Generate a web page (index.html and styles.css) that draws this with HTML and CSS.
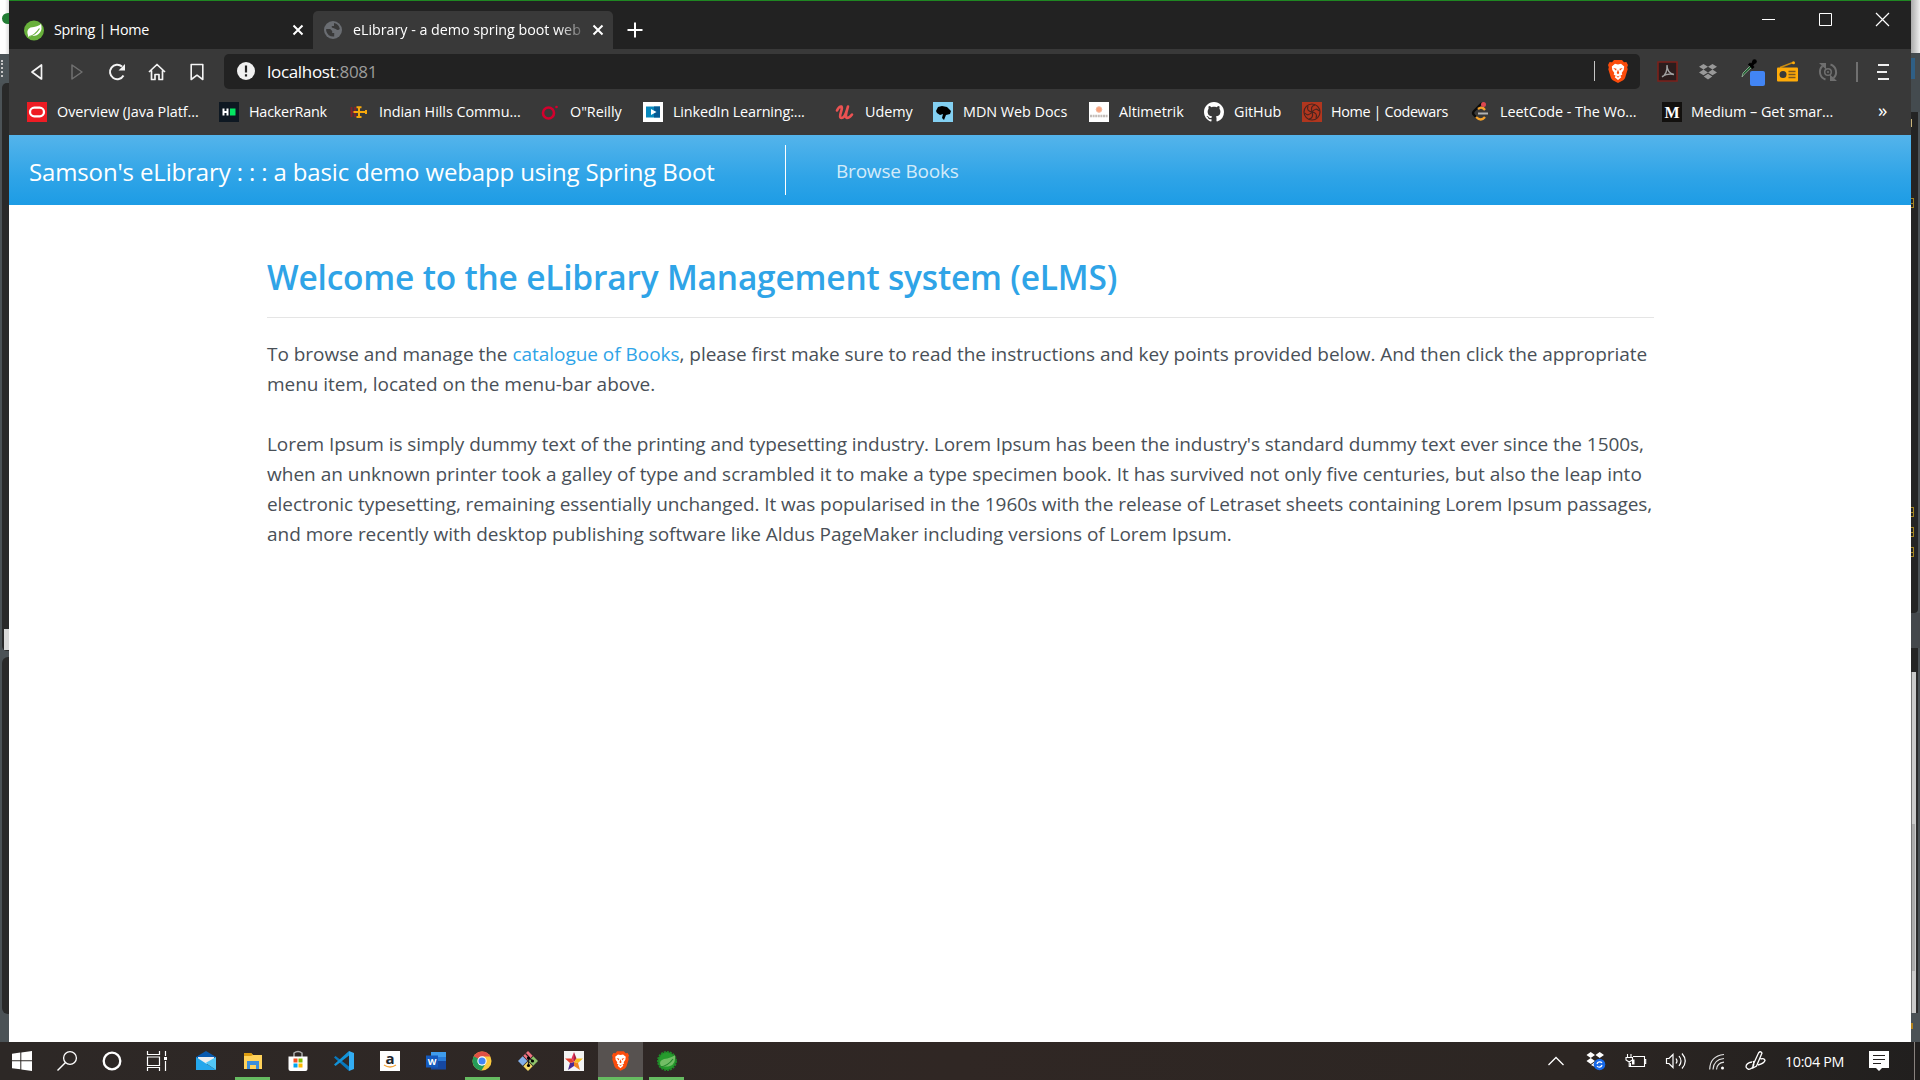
FILE: index.html
```
<!DOCTYPE html>
<html lang="en">
<head>
<meta charset="utf-8">
<title>eLibrary - a demo spring boot webapp</title>
<link rel="stylesheet" href="styles.css">
</head>
<body>
<svg class="defs" width="0" height="0" aria-hidden="true">
  <symbol id="x" viewBox="0 0 12 12"><path d="M1.5 1.5l9 9M10.500 1.500l-9 9" stroke="currentColor" stroke-width="2"/></symbol>
  <symbol id="brave" viewBox="0 0 20 23">
    <path d="M6 0h8l2 2.300 2.400-.2L20 5l-.8 2.300.5 2-2.500 8.200q-.5 1.700-2 2.800L10 23l-5.200-2.700q-1.500-1.100-2-2.800L.3 9.300l.5-2L0 5l1.600-2.900L4 2.300z" fill="#fb4c0c"/>
    <path d="M7 3.800l3 .6 3-.6 3.200 2.800-.5 3.400-2 3 .6 1.500-2 1.200 1 1.500L10 20l-3.300-2.800 1-1.500-2-1.200.6-1.500-2-3-.5-3.400z" fill="#fff"/>
    <path d="M5.300 8l3.200.8-.4 2zM14.700 8l-3.200.8.4 2zM10 9.500l1.300 3.500L10 14.200 8.700 13zM8 15.500l2 1 2-1-2 2.300z" fill="#fb4c0c"/>
  </symbol>
  <symbol id="dropbox" viewBox="0 0 18 16"><path d="M4.500 0L9 2.800 4.500 5.600 0 2.800zM13.500 0L18 2.800l-4.500 2.800L9 2.800zM4.500 5.600L9 8.400l-4.500 2.800L0 8.400zM13.500 5.600L18 8.400l-4.500 2.800L9 8.400zM4.700 12.500L9 9.800l4.300 2.700L9 15.600z" fill="currentColor"/></symbol>
</svg>
<div class="desktop">
  <aside class="edge edge-left">
    <div class="l-white"><i class="leaf-bit"></i></div>
    <div class="l-grey"><i class="dots"></i></div>
    <div class="l-panel l-first"><i class="thumb"></i></div>
    <div class="l-gap"></div>
    <div class="l-panel l-second"></div>
    <div class="l-foot"></div>
  </aside>

  <main class="window">
    <header class="tabs">
      <div class="tab">
        <svg class="tab-icon" width="20" height="21" viewBox="0 0 20 21"><circle cx="10" cy="10.500" r="10" fill="#68b03b"/><path d="M17 4q1.500 5-1 8.500-3 4-9 3.500l-2 1.300-.7-.8Q1.500 10 6.500 7.600 14 6.800 17 4z" fill="#fff"/><path d="M5 16.500q6-1 10.500-8" stroke="#68b03b" stroke-width="1.200" fill="none"/></svg>
        <span class="tab-title home-title">Spring | Home</span>
        <svg class="close" width="12" height="12"><use href="#x"/></svg>
      </div>
      <div class="tab active">
        <svg class="tab-icon globe" width="18" height="18" viewBox="0 0 18 18"><circle cx="9" cy="9" r="9" fill="#6a6d72"/><path d="M2.200 8h4l2 2v2h2v3.500Q4 16 2.200 10zM10 2q5 1 5.800 6-2 2-4 0-2-1-4-1.500V5h2.200z" fill="#393939"/></svg>
        <span class="tab-title">eLibrary - a demo spring boot web</span>
        <svg class="close" width="12" height="12"><use href="#x"/></svg>
      </div>
      <svg class="plus" width="16" height="16" viewBox="0 0 16 16"><path d="M8 .5v15M.5 8h15" stroke="#fff" stroke-width="2"/></svg>
      <div class="controls">
        <svg width="13" height="13"><path d="M0 6.500h13" stroke="#fff"/></svg>
        <svg width="13" height="13"><path d="M.5.500h12v12H.5z" stroke="#fff" fill="none"/></svg>
        <svg width="13" height="13"><path d="M0 0l13 13M13 0L0 13" stroke="#fff" stroke-width="1.200"/></svg>
      </div>
    </header>

    <div class="toolbar">
      <div class="nav-icons">
        <svg width="18" height="18" viewBox="0 0 18 18"><path d="M13.500 2v14L4 9z" fill="none" stroke="#f4f4f4" stroke-width="1.700" stroke-linejoin="round"/></svg>
        <svg width="18" height="18" viewBox="0 0 18 18"><path d="M4 2v14L14 9z" fill="none" stroke="#707070" stroke-width="1.500" stroke-linejoin="round"/></svg>
        <svg width="18" height="18" viewBox="0 0 18 18"><path d="M15.500 12.500A7.200 7.200 0 1 1 14 3.600" fill="none" stroke="#f4f4f4" stroke-width="2"/><path d="M17 1v6.500h-6.500z" fill="#f4f4f4"/></svg>
        <svg width="18" height="18" viewBox="0 0 18 18"><path d="M1 9l8-7.500L17 9M3.500 7.500v9H7v-5h4v5h3.500v-9" fill="none" stroke="#f4f4f4" stroke-width="1.700" stroke-linejoin="round"/></svg>
        <svg width="18" height="18" viewBox="0 0 18 18"><path d="M3.200 1.500h11.600v15L9 12.200l-5.800 4.300z" fill="none" stroke="#f4f4f4" stroke-width="1.600" stroke-linejoin="round"/></svg>
      </div>
      <div class="address">
        <svg width="18" height="18" viewBox="0 0 18 18"><circle cx="9" cy="9" r="9" fill="#f0f0f0"/><path d="M9 3.500v7M9 12.300v2.300" stroke="#222" stroke-width="2.200"/></svg>
        <span class="url">localhost<span class="port">:8081</span></span>
        <i class="address-rule"></i>
        <svg class="shield" width="20" height="23"><use href="#brave"/></svg>
      </div>
      <div class="extensions">
        <svg width="21" height="21" viewBox="0 0 21 21"><path d="M1 1h19v19H1z" fill="#2b1d1d" stroke="#7c211b" stroke-width="1.600"/><path d="M5 16q5.500-3 5-12M10 4q0 8 7 9.500-6-1.500-12 2" fill="none" stroke="#a0a0a0" stroke-width="1.400"/></svg>
        <svg class="grey" width="18" height="16"><use href="#dropbox"/></svg>
        <svg width="26" height="28" viewBox="0 0 26 28"><path d="M2 19l1-4 7.500-7.500 1.500 1.500-8 7.500z" fill="#195c2a" stroke="#9bb7a0" stroke-width=".8"/><path d="M9 5.500l4.500 4.500M11 8l3.500-4.500" stroke="#000" stroke-width="3"/><circle cx="14.500" cy="3.500" r="2.300"/><rect x="10" y="13" width="15" height="15" rx="2" fill="#4285f4"/></svg>
        <svg width="21" height="21" viewBox="0 0 21 21"><path d="M3 6.500L16 1.500" stroke="#c88c12" stroke-width="1.500"/><circle cx="16.500" cy="1.700" r="1.500" fill="#ffab08"/><rect y="6.500" width="21" height="14" rx="1" fill="#ffab08"/><circle cx="6" cy="13.500" r="3.500" fill="#393939"/><path d="M11.500 10.500h7M11.500 13.500h7M11.500 16.500h7" stroke="#7b5820" stroke-width="1.300"/></svg>
        <svg width="20" height="20" viewBox="0 0 20 20"><path d="M7.500 17.500A8 8 0 0 1 4.500 4M12.500 2.500a8 8 0 0 1 3 13.500" fill="none" stroke="#6f6f6f" stroke-width="2"/><path d="M1 1h7v6.500zM19 19h-7v-6.500z" fill="#6f6f6f"/><circle cx="10" cy="10" r="3.300" fill="none" stroke="#6f6f6f" stroke-width="1.500"/><circle cx="10" cy="10" r="1" fill="#6f6f6f"/></svg>
        <i class="tool-rule"></i>
        <svg width="12" height="16" viewBox="0 0 12 16"><path d="M1 1h11M0 8h10M1 15h11" stroke="#f0f0f0" stroke-width="2"/></svg>
      </div>
    </div>

    <nav class="bookmarks">
      <a><svg viewBox="0 0 20 20"><path d="M0 0h20v20H0z" fill="#ee1c24"/><rect x="3" y="5.700" width="14" height="8.600" rx="4.300" fill="none" stroke="#fff" stroke-width="2.300"/></svg>Overview (Java Platf...</a>
      <a class="tight"><svg viewBox="0 0 20 20"><path d="M0 0h20v20H0z" fill="#0e1822"/><path d="M4.500 6.500v7M8.500 6.500v7M4.500 10h4" stroke="#fff" stroke-width="2"/><path d="M11 6.500h5.500v7H11z" fill="#04e762"/></svg>HackerRank</a>
      <a><svg viewBox="0 0 20 20"><path d="M2.500 5v10M6 5v10M2.500 10h5" stroke="#842129" stroke-width="1.800"/><path d="M10 4.500v11M4.500 10h13M7.500 5.200h5M7.500 15h5M17 8v4" stroke="#f6a80c" stroke-width="2"/></svg>Indian Hills Commu...</a>
      <a><svg viewBox="0 0 20 20"><circle cx="8.500" cy="11" r="5.500" fill="none" stroke="#d3002d" stroke-width="2.600"/><circle cx="16.500" cy="5" r="1.300" fill="#d3002d"/></svg>O"Reilly</a>
      <a class="snug"><svg viewBox="0 0 20 20"><path d="M0 0h20v20H0z" fill="#fff"/><path d="M3 4.500h14v11H3z" fill="#0788bd"/><path d="M11 4.500h6v11h-6z" fill="#065a94"/><path d="M8 7l5.500 3L8 13z" fill="#fff"/></svg>LinkedIn Learning:...</a>
      <a><svg viewBox="0 0 20 20"><path d="M2 8.500Q4 4 6.500 4.500 7.500 6 6 10q-2 6 .5 6 3 0 5.500-8l1-3.500q-3.500 11-1 11.500 2.500 0 5-3.500" fill="none" stroke="#ec5252" stroke-width="2.600" stroke-linecap="round" stroke-linejoin="round"/></svg>Udemy</a>
      <a><svg viewBox="0 0 20 20"><path d="M0 0h20v20H0z" fill="#83d0f2"/><path d="M3 9l2-4 4-1 5 1 4 4-1 3-4 1-2 5-2-2 1-4-3 1-3-2z"/></svg>MDN Web Docs</a>
      <a><svg viewBox="0 0 20 20"><path d="M0 0h20v20H0z" fill="#fff"/><circle cx="10" cy="7.500" r="2.800" fill="#f8a37e" stroke="#f4b89d"/><path d="M1 14h18" stroke="#c3bdb9" stroke-width="2.500" stroke-dasharray="2 .6"/></svg>Altimetrik</a>
      <a><svg viewBox="0 0 16 16"><path fill="#fff" d="M8 0C3.580 0 0 3.580 0 8c0 3.540 2.290 6.530 5.470 7.590.4.070.55-.17.55-.38 0-.19-.01-.82-.01-1.490-2.010.37-2.530-.49-2.690-.94-.09-.23-.48-.94-.82-1.130-.28-.15-.68-.52-.01-.53.63-.01 1.080.58 1.230.82.72 1.210 1.870.87 2.330.66.07-.52.28-.87.51-1.070-1.780-.2-3.640-.89-3.640-3.950 0-.87.31-1.590.82-2.150-.08-.2-.36-1.020.08-2.120 0 0 .67-.21 2.200.82.640-.18 1.320-.27 2-.27s1.360.09 2 .27c1.530-1.040 2.200-.82 2.200-.82.44 1.100.16 1.920.08 2.120.51.56.82 1.270.82 2.150 0 3.070-1.870 3.750-3.650 3.950.29.25.54.73.54 1.480 0 1.070-.01 1.930-.01 2.200 0 .21.15.46.55.38A8.010 8.010 0 0 0 16 8c0-4.420-3.580-8-8-8z"/></svg>GitHub</a>
      <a class="tighter"><svg viewBox="0 0 20 20"><path d="M0 0h20v20H0z" fill="#b1361e"/><g fill="none" stroke="#48251f" stroke-width="1.200"><circle cx="10" cy="10" r="8"/><path d="M10 10Q8 4 13 3M10 10Q14 5 17 9M10 10q6 1 4 6M10 10q2 6-3 7M10 10q-4 5-7 1M10 10Q4 9 6 4"/></g></svg>Home | Codewars</a>
      <a><svg viewBox="0 0 20 20"><path d="M12 1L4 9q-2 2 0 4l3 3" fill="none" stroke="#0b0b0b" stroke-width="2.300"/><path d="M8 7q4-3 7 1M6 15q5 5 9 0" fill="none" stroke="#f7a32b" stroke-width="2.300"/><path d="M8 11.500h10" stroke="#b3b3b3" stroke-width="2"/><circle cx="13.500" cy="2.500" r="2.500" fill="#dc4850"/></svg>LeetCode - The Wo...</a>
      <a class="last"><svg viewBox="0 0 20 20"><path d="M0 0h20v20H0z" fill="#12100e"/><text x="10" y="15.500" text-anchor="middle" class="m-mark">M</text></svg>Medium – Get smar...</a>
      <span class="more">»</span>
    </nav>

    <div class="site-bar">
      <div class="brand">Samson's eLibrary : : : a basic demo webapp using Spring Boot</div>
      <div class="site-link">Browse Books</div>
    </div>

    <section class="content">
      <h1>Welcome to the eLibrary Management system (eLMS)</h1>
      <p>To browse and manage the <a>catalogue of Books</a>, please first make sure to read the instructions and key points provided below. And then click the appropriate<br>menu item, located on the menu-bar above.</p>
      <p><span class="wide">Lorem Ipsum is simply dummy text of the printing and typesetting industry. Lorem Ipsum has been the industry's standard dummy text ever since the 1500s,</span><br><span class="normal">when an unknown printer took a galley of type and scrambled it to make a type specimen book. It has survived not only five centuries, but also the leap into</span><br><span class="wide">electronic typesetting, remaining essentially unchanged. It was popularised in the 1960s with the release of Letraset sheets containing Lorem Ipsum passages,</span><br>and more recently with desktop publishing software like Aldus PageMaker including versions of Lorem Ipsum.</p>
    </section>
  </main>

  <aside class="edge edge-right">
    <div class="r-white"></div>
    <div class="r-grey"><i></i></div>
    <div class="r-panel"><i class="g g1"></i><i class="g g2"></i><i class="g g3"></i><i class="g g4"></i><i class="g0"></i></div>
    <div class="r-gap"></div>
    <div class="r-second"></div>
    <div class="r-scroll"><i></i></div>
    <div class="r-foot"><i></i></div>
  </aside>
</div>

<footer class="taskbar">
  <div class="apps">
    <div class="app"><svg width="20" height="20" viewBox="0 0 20 20"><path d="M0 2.800L8.300 1.600v7.700H0zM9.300 1.500L20 0v9.300H9.300zM0 10.300h8.300v8L0 17.200zM9.300 10.300H20V20L9.300 18.500z" fill="#fff"/></svg></div>
    <div class="app"><svg width="20" height="20" viewBox="0 0 20 20"><circle cx="13" cy="7" r="6.400" fill="none" stroke="#fff" stroke-width="1.300"/><path d="M8.500 11.500L.5 19.500" stroke="#fff" stroke-width="1.500"/></svg></div>
    <div class="app"><svg width="20" height="20" viewBox="0 0 20 20"><circle cx="10" cy="10" r="8.300" fill="none" stroke="#fff" stroke-width="2.300"/></svg></div>
    <div class="app"><svg width="20" height="20" viewBox="0 0 20 20"><path d="M.5 0v3.500h12V0M.5 6h12v8.500H.5zM.5 20v-3.500h12V20M18.500 0v5M18.500 10v10" fill="none" stroke="#fff" stroke-width="1.200"/><path d="M17 6h3v3h-3z" fill="#fff"/></svg></div>
    <div class="app"><svg width="20" height="20" viewBox="0 0 20 20"><path d="M0 6l10-6 10 6v4H0z" fill="#0759ae"/><path d="M2 6h16v7H2z" fill="#eee"/><path d="M0 6l20 13H0z" fill="#24a7ec"/><path d="M20 6v13L9.500 12z" fill="#52c8f7"/></svg></div>
    <div class="app open"><svg width="18" height="18" viewBox="0 0 18 18"><path d="M0 1h7l2 2h9v14H0z" fill="#ffd25a"/><path d="M0 1h7l2 2-2 1H0z" fill="#dc9c10"/><path d="M3 9h12v8h-3v-4H6v4H3z" fill="#3b8edb"/></svg></div>
    <div class="app"><svg width="20" height="20" viewBox="0 0 20 20"><path d="M6 6V2q4-3 8 0v4" fill="none" stroke="#aaa" stroke-width="1.500"/><path d="M.5 5.500h19V18q0 2-2 2h-15q-2 0-2-2z" fill="#fff"/><path d="M5.500 7.500h4v4h-4z" fill="#f25022"/><path d="M10.500 7.500h4v4h-4z" fill="#7fba00"/><path d="M5.500 12.500h4v4h-4z" fill="#00a4ef"/><path d="M10.500 12.500h4v4h-4z" fill="#ffb900"/></svg></div>
    <div class="app"><svg width="20" height="20" viewBox="0 0 20 20"><path d="M0 6.500L1.500 5 15 15.500V20z" fill="#0878bc"/><path d="M0 13.500L1.500 15 15 4.500V0z" fill="#1292d8"/><path d="M15 0l5 2v16l-5 2z" fill="#33adf3"/></svg></div>
    <div class="app"><svg width="20" height="20" viewBox="0 0 20 20"><path d="M0 0h20v20H0z" fill="#fff"/><text x="10" y="13" text-anchor="middle" class="a-mark">a</text><path d="M4 14q6 4 12 0" fill="none" stroke="#f4a43a" stroke-width="1.300"/></svg></div>
    <div class="app"><svg width="20" height="20" viewBox="0 0 20 20"><path d="M5 1h15v6H5z" fill="#3f9cec"/><path d="M5 6h15v5H5z" fill="#287bd8"/><path d="M5 10h15v8.500H5z" fill="#1648a2"/><path d="M0 4.500h12v12H0z" fill="#1459bd"/><text x="6" y="14" text-anchor="middle" class="w-mark">W</text></svg></div>
    <div class="app open"><svg width="20" height="20" viewBox="0 0 20 20"><circle cx="10" cy="10" r="9.500" fill="#fbca3e"/><path d="M1.800 5.200A9.500 9.500 0 0 1 18.500 5.500H10L6 13z" fill="#df5146"/><path d="M1.700 5.300A9.500 9.500 0 0 0 9.500 19.500L14 12z" fill="#259b57"/><circle cx="10" cy="10" r="4.700" fill="#fff"/><circle cx="10" cy="10" r="3.600" fill="#4285f4"/></svg></div>
    <div class="app"><svg width="20" height="20" viewBox="0 0 20 20"><path d="M10 0l4.700 4.700L10 9.400 5.300 4.700z" fill="#ef7280"/><path d="M4.700 5.300L9.400 10l-4.700 4.700L0 10z" fill="#83afe9"/><path d="M15.300 5.300L20 10l-4.700 4.700-4.700-4.700z" fill="#8ec36a"/><path d="M10 10.600l4.700 4.700L10 20l-4.700-4.700z" fill="#f6d968"/><path d="M7.500 2.500l3 3v9M10.500 6l4 4" fill="none" stroke="#222" stroke-width="1.300"/><circle cx="10.500" cy="14.500" r="1.600"/><circle cx="10.500" cy="7" r="1.600"/><circle cx="14.500" cy="10" r="1.600"/></svg></div>
    <div class="app"><svg width="20" height="20" viewBox="0 0 20 20"><path d="M0 0h20v20H0z" fill="#f4f4f4"/><path d="M10 11V1L7.500 7.500z" fill="#df3158"/><path d="M10 11V1l2.500 6.500z" fill="#a9213e"/><path d="M10 11l2.500-3.500H19L14 12z" fill="#f6be20"/><path d="M10 11l4 1 2 7-6-4z" fill="#f0831f"/><path d="M10 11v4l-6 4 2-7z" fill="#4b2a91"/><path d="M10 11l-4 1-5-4.500h6.500z" fill="#e8412f"/></svg></div>
    <div class="app open current"><svg width="17" height="20"><use href="#brave"/></svg></div>
    <div class="app open"><svg width="20" height="20" viewBox="0 0 20 20"><circle cx="10" cy="10" r="9" fill="#269b2d" stroke="#208928" stroke-width="2" stroke-dasharray="2 1"/><path d="M18 4q1 9-5 11-4 1-9 0-3-5 3-7 7-1 11-4z" fill="#72bd65"/><path d="M3 16q8-1 13-8" stroke="#26872e" stroke-width="1.200" fill="none"/></svg></div>
  </div>
  <div class="tray">
    <svg width="16" height="20" viewBox="0 0 16 20"><path d="M.5 14L8 6.500l7.500 7.500" fill="none" stroke="#fff" stroke-width="1.300"/></svg>
    <svg width="20" height="20" viewBox="0 0 20 20"><path d="M4.700 1L9 4 4.700 7 .5 4zM13.700 1L18 4l-4.300 3L9.500 4zM4.700 7L9 10l-4.300 3L.5 10zM9 11l3 3-3 2-4-2z" fill="#fff"/><circle cx="13.500" cy="13.500" r="5.800" fill="#1769e8"/><path d="M11 13a2.800 2.800 0 0 1 5-1M16 14a2.800 2.800 0 0 1-5 1" fill="none" stroke="#fff" stroke-width="1.200"/></svg>
    <svg width="21" height="20" viewBox="0 0 21 20"><path d="M7 5.500h11.500v10h-14V12M18.500 8.500h1.200v4h-1.200M1.500 3v3M5 3v3M0 6.500h6.500V9L3.200 11 0 9zM3.200 10v5.500h2" fill="none" stroke="#fff" stroke-width="1.100"/><path d="M6 8.500h2.500v5H6z" fill="#fff"/></svg>
    <svg width="21" height="20" viewBox="0 0 21 20"><path d="M.5 7.500H3l4-4v13l-4-4H.5zM10 7.500q2 2.500 0 5M13 5q4 5 0 10M16 2.500q6.500 7.500 0 15" fill="none" stroke="#fff" stroke-width="1.200"/></svg>
    <svg width="16" height="20" viewBox="0 0 16 20"><g fill="none" stroke="#e4e4e4" stroke-width="1.200"><path d="M.7 18.500Q1 5 15 3.500M4 18.500Q4.500 8.500 15 7.500M7.500 18.500q.5-6.500 7.500-7.300"/></g><circle cx="13.500" cy="17" r="1.500" fill="#fff"/></svg>
    <svg width="21" height="20" viewBox="0 0 21 20"><path d="M8 14L13.500 2q2-2.500 3.500 0L11.500 15 8 17zM7 11q-6 1-6 5 2 4 6 1 3-4 1-7M15.500 8q4-1 4.500 1.500-1 3-7 4.500" fill="none" stroke="#fff" stroke-width="1.300"/></svg>
    <span class="clock">10:04 PM</span>
    <svg width="20" height="20" viewBox="0 0 20 20"><path d="M0 0h20v17h-7l-3 3-3-3H0z" fill="#fff"/><path d="M4 4.500h12M4 8.500h12M4 12.500h8" stroke="#24201f" stroke-width="1.200"/></svg>
    <i class="show-desktop"></i>
  </div>
</footer>
</body>
</html>
```
FILE: styles.css
```
* { box-sizing: border-box; }
body { margin: 0; width: 1920px; height: 1080px; overflow: hidden; font-family: "Open Sans", "Noto Sans", sans-serif; background: #4b5256; }
svg { display: block; flex: none; overflow: visible; }
.defs { position: absolute; }
.desktop { display: grid; grid-template-columns: 9px 1902px 9px; height: 1042px; }

/* window */
.window { display: grid; grid-template-rows: 49px 46px 40px 70px 1fr; background: #fff; min-width: 0; color: #fff; }
.tabs { display: flex; align-items: flex-end; background: #222; border-top: 1px solid #1f8722; font-size: 14.3px; }
.tab { display: flex; align-items: center; width: 304px; height: 38px; padding: 0 9px 0 15px; white-space: nowrap; }
.active { width: 300px; padding: 0 9px 0 11px; background: #393939; border-radius: 5px 5px 0 0; }
.tab-icon { margin-right: 10px; }
.globe { margin-right: 11px; }
.tab-title { width: 231px; overflow: hidden; line-height: 24px; letter-spacing: -.02px; }
.home-title { width: 228px; letter-spacing: -.25px; }
.tab .close { margin-left: auto; }
.active .tab-title { -webkit-mask-image: linear-gradient(90deg, #000 205px, transparent 236px); mask-image: linear-gradient(90deg, #000 205px, transparent 236px); }
.plus { margin: 0 0 11px 14px; }
.controls { display: flex; gap: 44px; margin: 0 22px 23px auto; }

.toolbar { display: flex; align-items: center; background: #393939; padding-bottom: 1px; }
.nav-icons { display: flex; gap: 22px; width: 215px; padding-left: 19px; }
.address { display: flex; align-items: center; width: 1416px; height: 35px; padding: 0 12px 1px 13px; background: #222; border-radius: 5px; }
.url { margin-left: 12px; font-size: 17px; letter-spacing: -.32px; }
.port { color: #9b9b9b; }
.address-rule { width: 1px; height: 20px; margin: 0 13px 0 auto; background: #c5c5c5; }
.extensions { display: grid; grid-template-columns: 42px 41px 37px 41px 38px 21px 12px; align-items: center; margin-left: 17px; }
.grey { color: #999; }
.tool-rule { width: 2px; height: 20px; background: #707070; }
.bookmarks { display: grid; grid-template-columns: 192px 130px 191px 103px 192px 98px 156px 115px 98px 168px 192px 216px auto; align-items: center; padding: 0 0 7px 18px; background: #393939; font-size: 14.4px; }
.bookmarks a { display: flex; align-items: center; gap: 10px; white-space: nowrap; letter-spacing: -.04px; }
.bookmarks svg { width: 20px; height: 20px; }
.bookmarks .tight { letter-spacing: -.24px; }
.bookmarks .snug { letter-spacing: -.14px; }
.bookmarks .tighter { gap: 9px; letter-spacing: -.37px; }
.bookmarks .last { gap: 9px; }
.more { font-size: 19px; line-height: 20px; padding-bottom: 3px; }
.m-mark { font: 700 16px "Liberation Serif", serif; fill: #fff; letter-spacing: 0; }

/* page */
.site-bar { display: flex; align-items: center; background: linear-gradient(#54b4eb, #2fa4e7 60%, #1d9ce5); white-space: nowrap; }
.brand { display: flex; align-items: center; width: 777px; height: 50px; padding: 4px 0 0 20px; border-right: 1px solid #fff; font-size: 24px; letter-spacing: -.14px; line-height: 38px; }
.site-link { margin: 2px 0 0 50px; font-size: 19px; letter-spacing: -.2px; color: rgba(255,255,255,.8); }
.content { padding: 51px 257px 0 258px; color: #495057; font-size: 19px; line-height: 30px; letter-spacing: -.03px; white-space: nowrap; }
h1 { height: 62px; margin: 0 0 21px; border-bottom: 1px solid #e5e5e5; color: #2fa4e7; font-size: 33.5px; font-weight: 600; letter-spacing: -.21px; line-height: 42px; }
.content p { margin: 0 0 30px; }
.content a { color: #2fa4e7; }
.wide { letter-spacing: -.065px; }
.normal { letter-spacing: 0; }

/* windows behind */
.edge { display: flex; flex-direction: column; overflow: hidden; }
.edge div { position: relative; flex: none; }
.edge i { position: absolute; }
.l-white { height: 54px; background: linear-gradient(90deg, #fff 5px, #ddd); }
.leaf-bit { left: 2px; top: 13px; width: 12px; height: 11px; border-radius: 50%; background: #237d35; }
.l-grey { height: 29px; background: #4c5458; }
.dots { left: 1px; top: 6px; height: 17px; border-left: 2px dotted #c5c5c5; }
.l-panel { margin-left: 2px; background: #292929; }
.l-first { height: 568px; border-radius: 5px 0 0 5px; }
.thumb { left: 2px; bottom: 1px; width: 5px; height: 21px; background: #d9d9d9; }
.l-gap { height: 6px; }
.l-second { height: 357px; border-radius: 6px 0 0 6px; }
.l-foot { height: 28px; }
.r-white { height: 53px; background: linear-gradient(90deg, #aaa, #eee); }
.r-grey { height: 59px; background: #444b4f; }
.r-grey i { left: 0; top: 5px; width: 4px; height: 21px; background: #2f5f85; }
.r-panel { width: 7px; height: 501px; background: #242424; border-bottom-right-radius: 4px; }
.g { left: 0; width: 3px; height: 10px; border: 1px solid #a58522; border-left: 0; background: linear-gradient(#a58522, #a58522) 0 4px / 3px 1px no-repeat; }
.g0 { left: 0; top: 7px; width: 1px; height: 8px; background: #c9b47a; }
.g1 { top: 86px; }
.g2 { top: 395px; }
.g3 { top: 415px; }
.g4 { top: 435px; }
.r-gap { height: 35px; background: #44484c; }
.r-second { width: 7px; height: 24px; background: #252525; }
.r-scroll { width: 7px; height: 341px; background: #cbcbcb; border-left: 1px solid #777; border-right: 2px solid #2b2b2b; }
.r-scroll i { left: 0; top: 152px; width: 3px; height: 147px; background: #aaa; }
.r-foot { height: 29px; }
.r-foot i { left: 0; top: 10px; width: 2px; height: 6px; background: #b3821b; }

/* taskbar */
.taskbar { display: flex; justify-content: space-between; height: 38px; background: linear-gradient(90deg, #2d2826, #302724 50%, #2c2623 82%, #211f1e); }
.apps { display: grid; grid-template-columns: 44px 46px 44px 45px 54px 39px 51px 41px 51px 41px 51px 41px 51px 45px 45px; }
.apps { grid-template-columns: 44px 46px 44px 46px 52px 41px 50px 42px 50px 42px 50px 42px 49px 45px 47px; }
.app { display: flex; justify-content: center; align-items: center; }
.apps .open { box-shadow: inset 0 -3px #66bb61; }
.apps .current { background-color: #575250; }
.apps .open:not(.current) { width: 35px; justify-self: center; }
.a-mark { font: 700 15px "Open Sans", sans-serif; fill: #20242c; }
.w-mark { font: 700 9px "Open Sans", sans-serif; fill: #fff; }
.tray { display: grid; grid-template-columns: 38px 40px 40px 43px 36px 40px 84px 45px 6px; align-items: center; color: #fff; }
.clock { font-size: 14.3px; letter-spacing: -.34px; }
.show-desktop { width: 1px; height: 38px; background: #88827e; }
```
